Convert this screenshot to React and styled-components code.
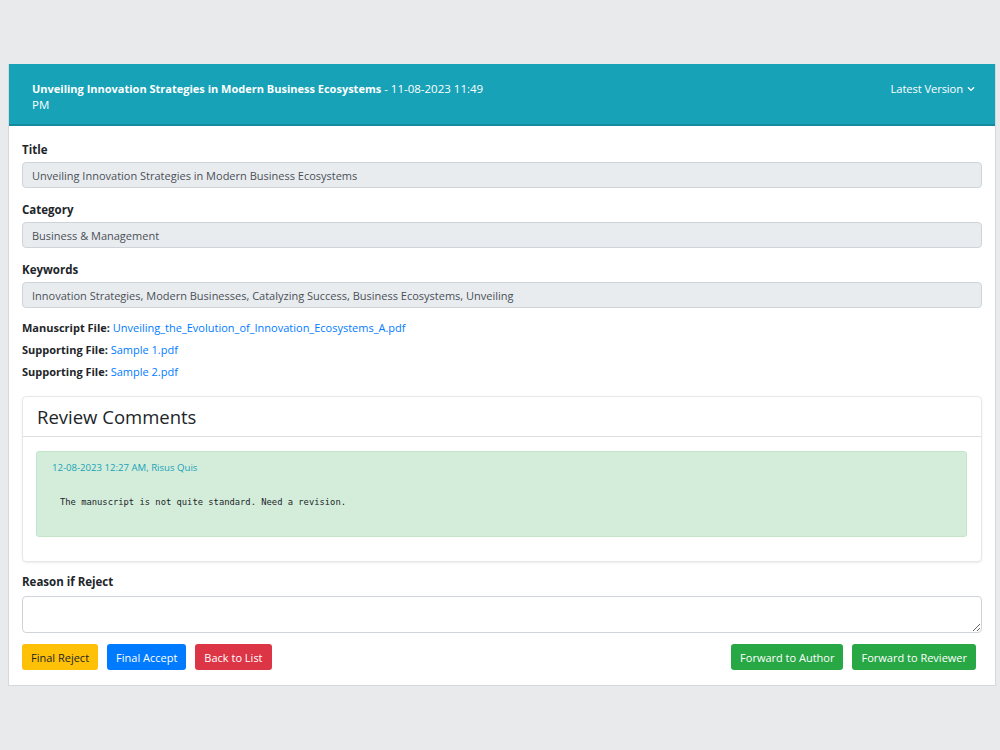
import styled, { createGlobalStyle } from "styled-components";
import { FaChevronDown } from "react-icons/fa";

const GlobalStyle = createGlobalStyle`
  html, body {
    margin: 0;
    padding: 0;
    background: #e9eaec;
  }
  body {
    font-family: "Open Sans", "Noto Sans", sans-serif;
    color: #212529;
    font-size: 12px;
  }
  * { box-sizing: border-box; }
`;

const Page = styled.div`
  min-height: 750px;
  padding: 64px 4px 0 8px;
`;

const Card = styled.div`
  background: #fff;
  border: 1px solid #d6d8db;
  border-top: none;
`;

const Header = styled.div`
  background: #17a2b8;
  border-bottom: 2px solid #138a9d;
  color: #fff;
  display: flex;
  justify-content: space-between;
  align-items: flex-start;
  padding: 17px 20px 10px 23px;
  min-height: 62px;
`;

const HeaderTitle = styled.div`
  width: 456px;
  line-height: 16px;
  font-size: 11.5px;

  strong {
    font-weight: 700;
    font-size: 11px;
  }
`;

const VersionToggle = styled.div`
  display: flex;
  align-items: center;
  gap: 4px;
  font-size: 11.2px;
  letter-spacing: -0.1px;
  line-height: 16px;

  svg {
    width: 8px;
    height: 8px;
  }
`;

const Body = styled.div`
  padding: 16px 13px 15px;
`;

const Field = styled.div`
  margin-bottom: 14px;
`;

const Label = styled.div`
  font-weight: 700;
  font-size: 11.5px;
  line-height: 16px;
  margin-bottom: ${(p) => (p.$loose ? "6px" : "4px")};
`;

const ReadOnly = styled.div`
  background: #e9ecef;
  border: 1px solid #ced4da;
  border-radius: 4px;
  height: 26px;
  padding: 0 9px;
  display: flex;
  align-items: center;
  font-size: 11px;
  color: #495057;
`;

const FileList = styled.div`
  display: flex;
  flex-direction: column;
  gap: 5.5px;
  margin-top: -2px;
`;

const FileRow = styled.div`
  font-size: 11px;
  line-height: 16.5px;

  b {
    font-weight: 700;
    color: #212529;
  }

  a {
    color: #007bff;
    text-decoration: none;
  }
`;

const ReviewCard = styled.div`
  margin-top: 15.5px;
  border: 1px solid #e6e7e9;
  border-radius: 4px;
  box-shadow: 0 1px 2px rgba(0, 0, 0, 0.08);
`;

const ReviewHeader = styled.div`
  padding: 8px 14px 7px;
  border-bottom: 1px solid #dcdee0;
  font-size: 18.5px;
  line-height: 24px;
  color: #212529;
`;

const ReviewBody = styled.div`
  padding: 14px 14px 24px 13px;
`;

const Comment = styled.div`
  background: #d4edda;
  border: 1px solid #c3e6cb;
  border-radius: 3px;
  min-height: 86px;
  padding: 9px 15px;
`;

const CommentMeta = styled.div`
  color: #17a2b8;
  font-size: 9.6px;
  line-height: 14px;
`;

const CommentText = styled.pre`
  margin: 22px 0 0 8px;
  font-family: "DejaVu Sans Mono", "Liberation Mono", monospace;
  font-size: 8.8px;
  color: #212529;
`;

const ReasonField = styled.div`
  margin-top: 12px;
`;

const TextArea = styled.textarea`
  display: block;
  width: 100%;
  height: 37px;
  border: 1px solid #ced4da;
  border-radius: 4px;
  resize: vertical;
  font-family: inherit;
`;

const Actions = styled.div`
  display: flex;
  justify-content: space-between;
  margin-top: 11px;
`;

const Group = styled.div`
  display: flex;
  gap: 9px;
  padding-right: ${(p) => (p.$right ? "6px" : "0")};
`;

const tones = {
  warning: { bg: "#ffc107", fg: "#212529" },
  primary: { bg: "#007bff", fg: "#fff" },
  danger: { bg: "#dc3545", fg: "#fff" },
  success: { bg: "#28a745", fg: "#fff" },
};

const Button = styled.button`
  height: 26px;
  padding: 0 9px;
  border: none;
  border-radius: 3px;
  font-family: inherit;
  font-size: 11px;
  background: ${(p) => tones[p.$tone].bg};
  color: ${(p) => tones[p.$tone].fg};
`;

export default function App() {
  return (
    <>
      <GlobalStyle />
      <Page>
        <Card>
          <Header>
            <HeaderTitle>
              <strong>Unveiling Innovation Strategies in Modern Business Ecosystems</strong> - 11-08-2023 11:49 PM
            </HeaderTitle>
            <VersionToggle>
              Latest Version <FaChevronDown />
            </VersionToggle>
          </Header>
          <Body>
            <Field>
              <Label>Title</Label>
              <ReadOnly>Unveiling Innovation Strategies in Modern Business Ecosystems</ReadOnly>
            </Field>
            <Field>
              <Label>Category</Label>
              <ReadOnly>Business &amp; Management</ReadOnly>
            </Field>
            <Field>
              <Label>Keywords</Label>
              <ReadOnly>
                Innovation Strategies, Modern Businesses, Catalyzing Success, Business Ecosystems, Unveiling
              </ReadOnly>
            </Field>
            <FileList>
              <FileRow>
                <b>Manuscript File:</b> <a href="#">Unveiling_the_Evolution_of_Innovation_Ecosystems_A.pdf</a>
              </FileRow>
              <FileRow>
                <b>Supporting File:</b> <a href="#">Sample 1.pdf</a>
              </FileRow>
              <FileRow>
                <b>Supporting File:</b> <a href="#">Sample 2.pdf</a>
              </FileRow>
            </FileList>
            <ReviewCard>
              <ReviewHeader>Review Comments</ReviewHeader>
              <ReviewBody>
                <Comment>
                  <CommentMeta>12-08-2023 12:27 AM, Risus Quis</CommentMeta>
                  <CommentText>The manuscript is not quite standard. Need a revision.</CommentText>
                </Comment>
              </ReviewBody>
            </ReviewCard>
            <ReasonField>
              <Label $loose>Reason if Reject</Label>
              <TextArea />
            </ReasonField>
            <Actions>
              <Group>
                <Button $tone="warning">Final Reject</Button>
                <Button $tone="primary">Final Accept</Button>
                <Button $tone="danger">Back to List</Button>
              </Group>
              <Group $right>
                <Button $tone="success">Forward to Author</Button>
                <Button $tone="success">Forward to Reviewer</Button>
              </Group>
            </Actions>
          </Body>
        </Card>
      </Page>
    </>
  );
}
